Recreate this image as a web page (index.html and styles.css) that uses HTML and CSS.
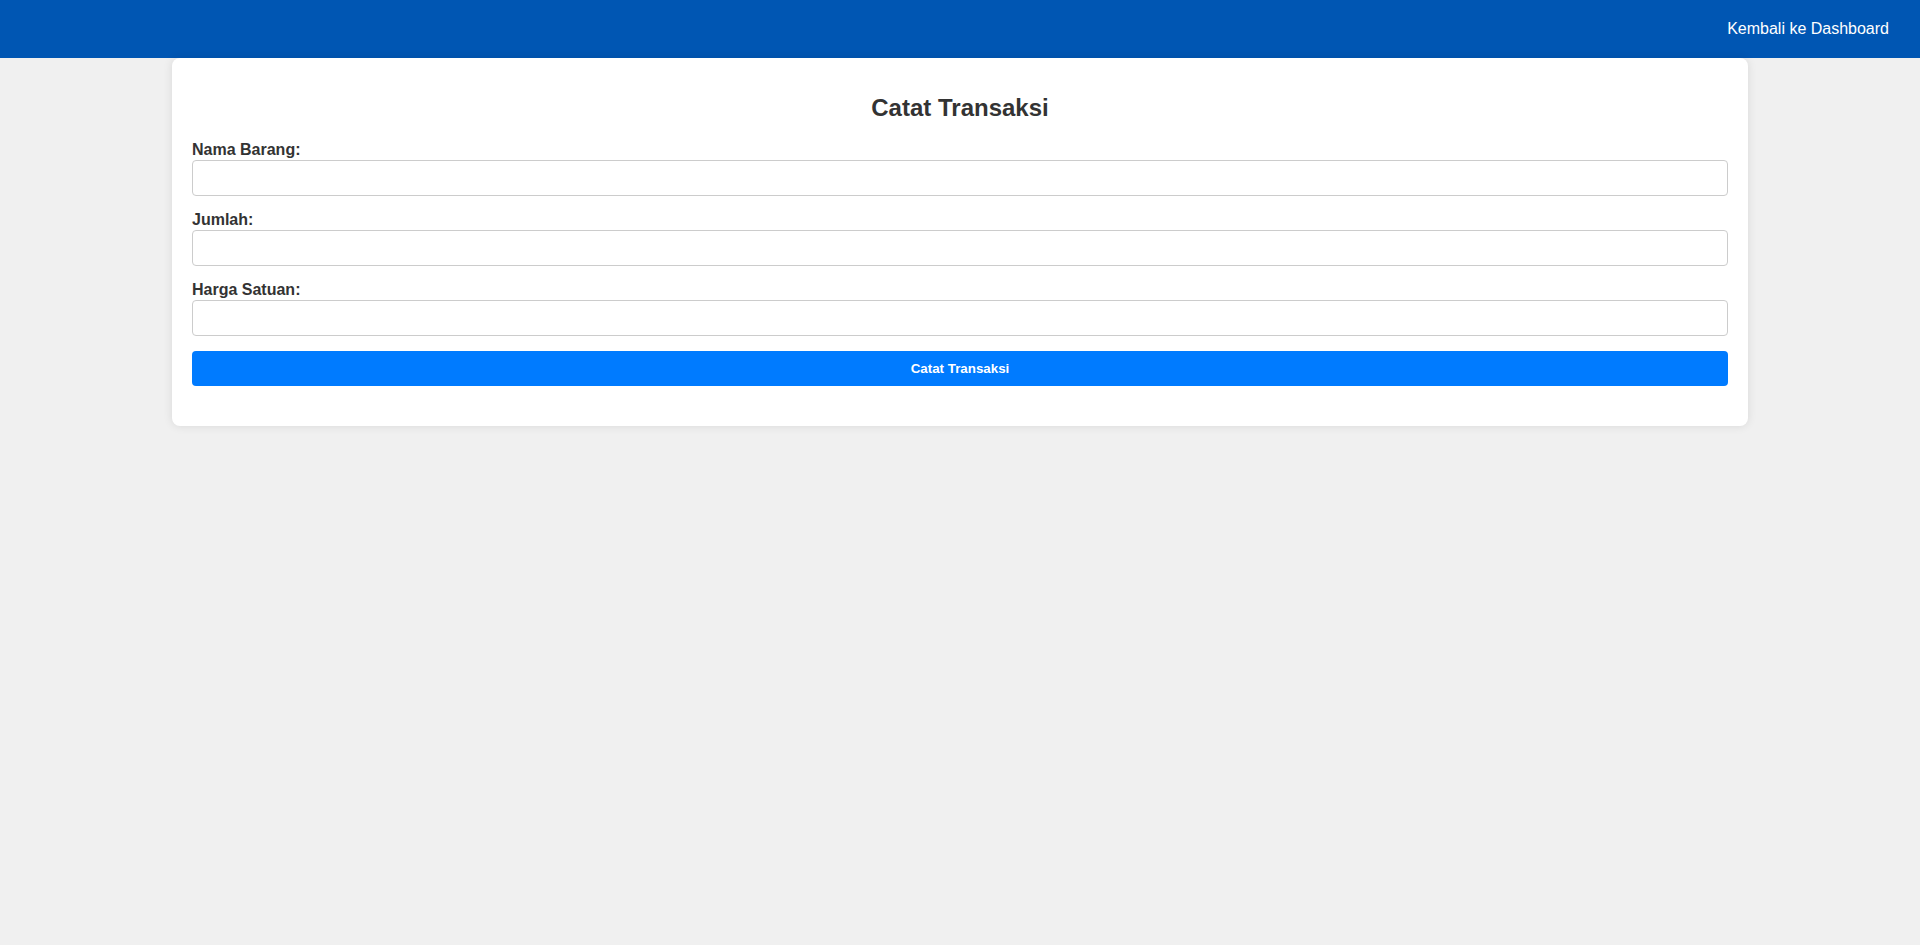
FILE: index.html
```html
<!DOCTYPE html>
<html lang="id">
<head>
<meta charset="utf-8">
<title>Catat Transaksi</title>
<link rel="stylesheet" href="styles.css">
</head>
<body>
<header class="topbar">
  <a class="back-link" href="#">Kembali ke Dashboard</a>
</header>
<main class="card">
  <h2 class="title">Catat Transaksi</h2>
  <form class="form">
    <label class="label" for="nama">Nama Barang:</label>
    <input class="field" id="nama" type="text">
    <label class="label" for="jumlah">Jumlah:</label>
    <input class="field" id="jumlah" type="number">
    <label class="label" for="harga">Harga Satuan:</label>
    <input class="field" id="harga" type="number">
    <button class="submit" type="button">Catat Transaksi</button>
  </form>
</main>
</body>
</html>
```

FILE: styles.css
```css
* { box-sizing: border-box; }
html, body {
  margin: 0;
  padding: 0;
}
body {
  background: #f0f0f0;
  font-family: "Liberation Sans", Arial, sans-serif;
  color: #333;
  min-height: 945px;
}
.topbar {
  height: 58px;
  background: #0056b3;
  display: flex;
  justify-content: flex-end;
  align-items: center;
  padding: 0 31px;
}
.back-link {
  color: #fff;
  text-decoration: none;
  font-size: 16px;
}
.card {
  width: 1576px;
  margin: 0 auto;
  background: #fff;
  border-radius: 8px;
  padding: 20px;
  box-shadow: 0 0 10px rgba(0, 0, 0, 0.1);
}
.title {
  text-align: center;
  font-size: 24px;
  font-weight: bold;
  margin: 15.5px 0 20px;
  line-height: 27.6px;
}
.form {
  display: flex;
  flex-direction: column;
  margin-bottom: 20px;
}
.label {
  font-weight: bold;
  font-size: 16px;
  line-height: 18.4px;
}
.field {
  height: 36px;
  border: 1px solid #ccc;
  border-radius: 4px;
  padding: 8px;
  font-size: 16px;
  font-family: inherit;
  margin-bottom: 15.6px;
  background: #fff;
}
.submit {
  height: 35px;
  border: none;
  border-radius: 4px;
  background: #007bff;
  color: #fff;
  font-weight: bold;
  font-size: 13.333px;
  font-family: "Liberation Sans", Arial, sans-serif;
  cursor: pointer;
}
```
